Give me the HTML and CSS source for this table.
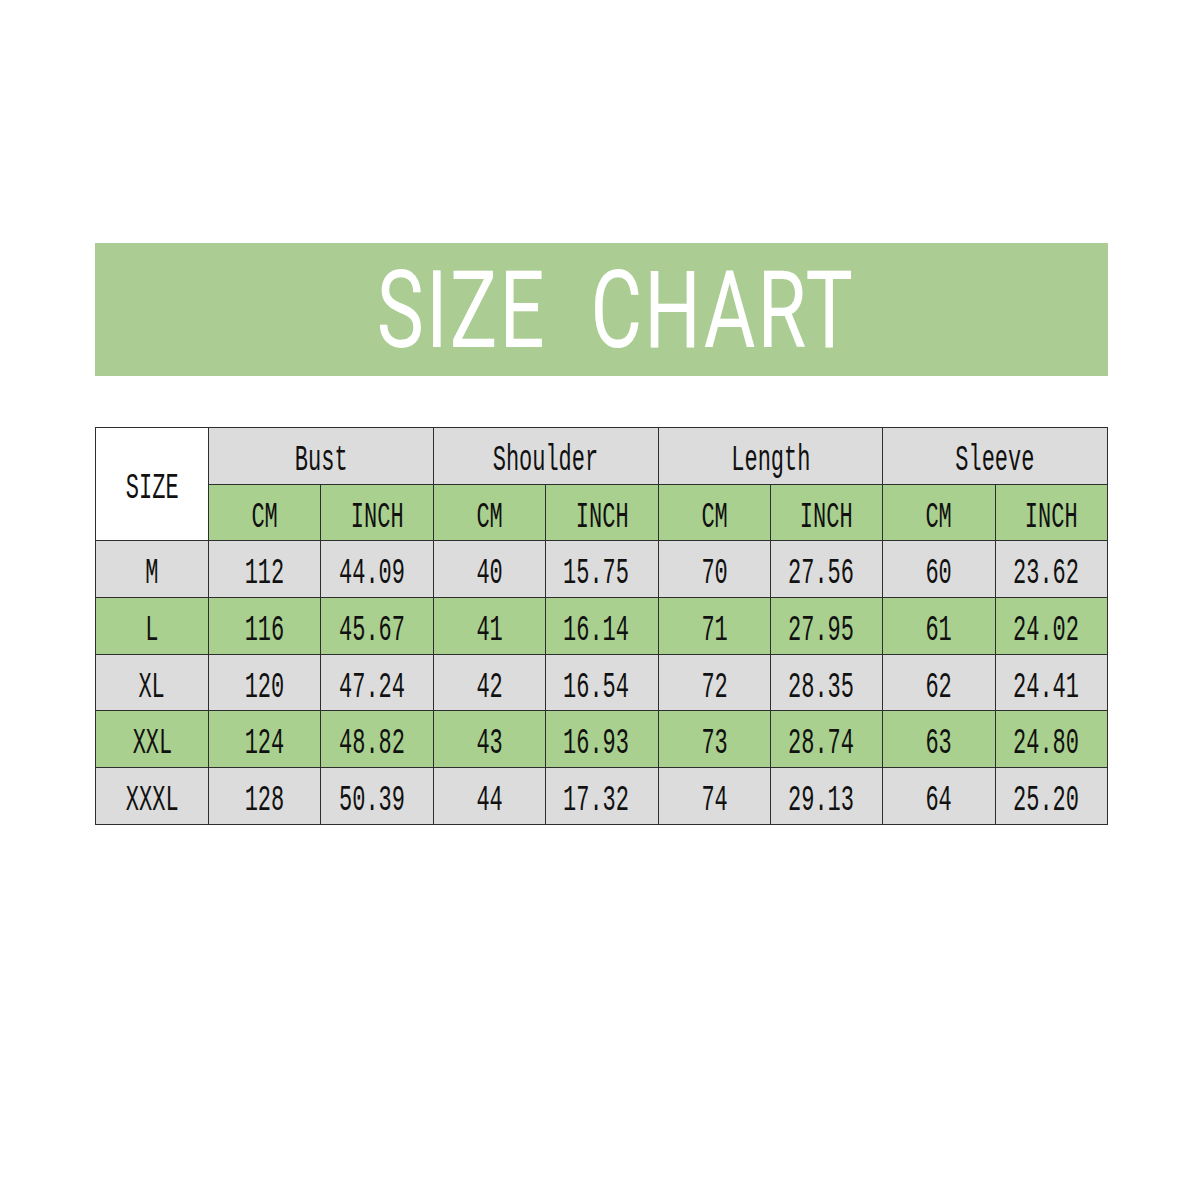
FILE: index.html
```html
<!DOCTYPE html>
<html>
<head>
<meta charset="utf-8">
<link rel="stylesheet" href="styles.css">
</head>
<body>
<div class="page">
  <div class="banner"><span class="title">SIZE&nbsp;&nbsp;CHART</span></div>
  <table class="chart">
    <colgroup>
      <col class="c0"><col><col><col><col><col><col><col><col>
    </colgroup>
    <tr class="gray">
      <td class="sizehead" rowspan="2"><span>SIZE</span></td>
      <td colspan="2"><span>Bust</span></td>
      <td colspan="2"><span>Shoulder</span></td>
      <td colspan="2"><span>Length</span></td>
      <td colspan="2"><span>Sleeve</span></td>
    </tr>
    <tr class="green">
      <td><span>CM</span></td><td><span>INCH</span></td>
      <td><span>CM</span></td><td><span>INCH</span></td>
      <td><span>CM</span></td><td><span>INCH</span></td>
      <td><span>CM</span></td><td><span>INCH</span></td>
    </tr>
    <tr class="gray data">
      <td><span>M</span></td><td><span>112</span></td><td><span>44.09</span></td><td><span>40</span></td><td><span>15.75</span></td><td><span>70</span></td><td><span>27.56</span></td><td><span>60</span></td><td><span>23.62</span></td>
    </tr>
    <tr class="green data">
      <td><span>L</span></td><td><span>116</span></td><td><span>45.67</span></td><td><span>41</span></td><td><span>16.14</span></td><td><span>71</span></td><td><span>27.95</span></td><td><span>61</span></td><td><span>24.02</span></td>
    </tr>
    <tr class="gray data">
      <td><span>XL</span></td><td><span>120</span></td><td><span>47.24</span></td><td><span>42</span></td><td><span>16.54</span></td><td><span>72</span></td><td><span>28.35</span></td><td><span>62</span></td><td><span>24.41</span></td>
    </tr>
    <tr class="green data">
      <td><span>XXL</span></td><td><span>124</span></td><td><span>48.82</span></td><td><span>43</span></td><td><span>16.93</span></td><td><span>73</span></td><td><span>28.74</span></td><td><span>63</span></td><td><span>24.80</span></td>
    </tr>
    <tr class="gray data">
      <td><span>XXXL</span></td><td><span>128</span></td><td><span>50.39</span></td><td><span>44</span></td><td><span>17.32</span></td><td><span>74</span></td><td><span>29.13</span></td><td><span>64</span></td><td><span>25.20</span></td>
    </tr>
  </table>
</div>
</body>
</html>
```

FILE: styles.css
```css
html, body {
  margin: 0;
  padding: 0;
  background: #ffffff;
}
.page {
  padding: 243px 0 0 95px;
  width: 1013px;
}
.banner {
  height: 133px;
  background: #abcd94;
  display: flex;
  align-items: center;
  justify-content: center;
}
.title {
  display: inline-block;
  font-family: Roboto, "Liberation Sans", sans-serif;
  font-size: 108px;
  line-height: 1;
  color: #ffffff;
  transform: scaleX(0.734);
  letter-spacing: 3px;
  margin-left: 28px;
}
.chart {
  margin-top: 51px;
  width: 1013px;
  border-collapse: collapse;
  table-layout: fixed;
  border: 1.5px solid #222222;
}
.chart col.c0 { width: 113px; }
.chart td {
  height: 45.7px;
  border: 1px solid #2e2e2e;
  padding: 10px 0 0 0;
  text-align: center;
  vertical-align: middle;
  font-family: "Liberation Mono", "DejaVu Sans Mono", monospace;
  font-size: 36px;
  line-height: 1;
  color: #111111;
  white-space: nowrap;
}
.chart td span {
  display: inline-block;
  margin: 0 -40px;
  transform: scaleX(0.61);
}
.chart .data td:nth-child(odd):not(:first-child) {
  padding-right: 11px;
}
.gray td { background: #dcdcdc; }
.green td { background: #a9d08e; }
.chart td.sizehead { background: #ffffff; }
```
